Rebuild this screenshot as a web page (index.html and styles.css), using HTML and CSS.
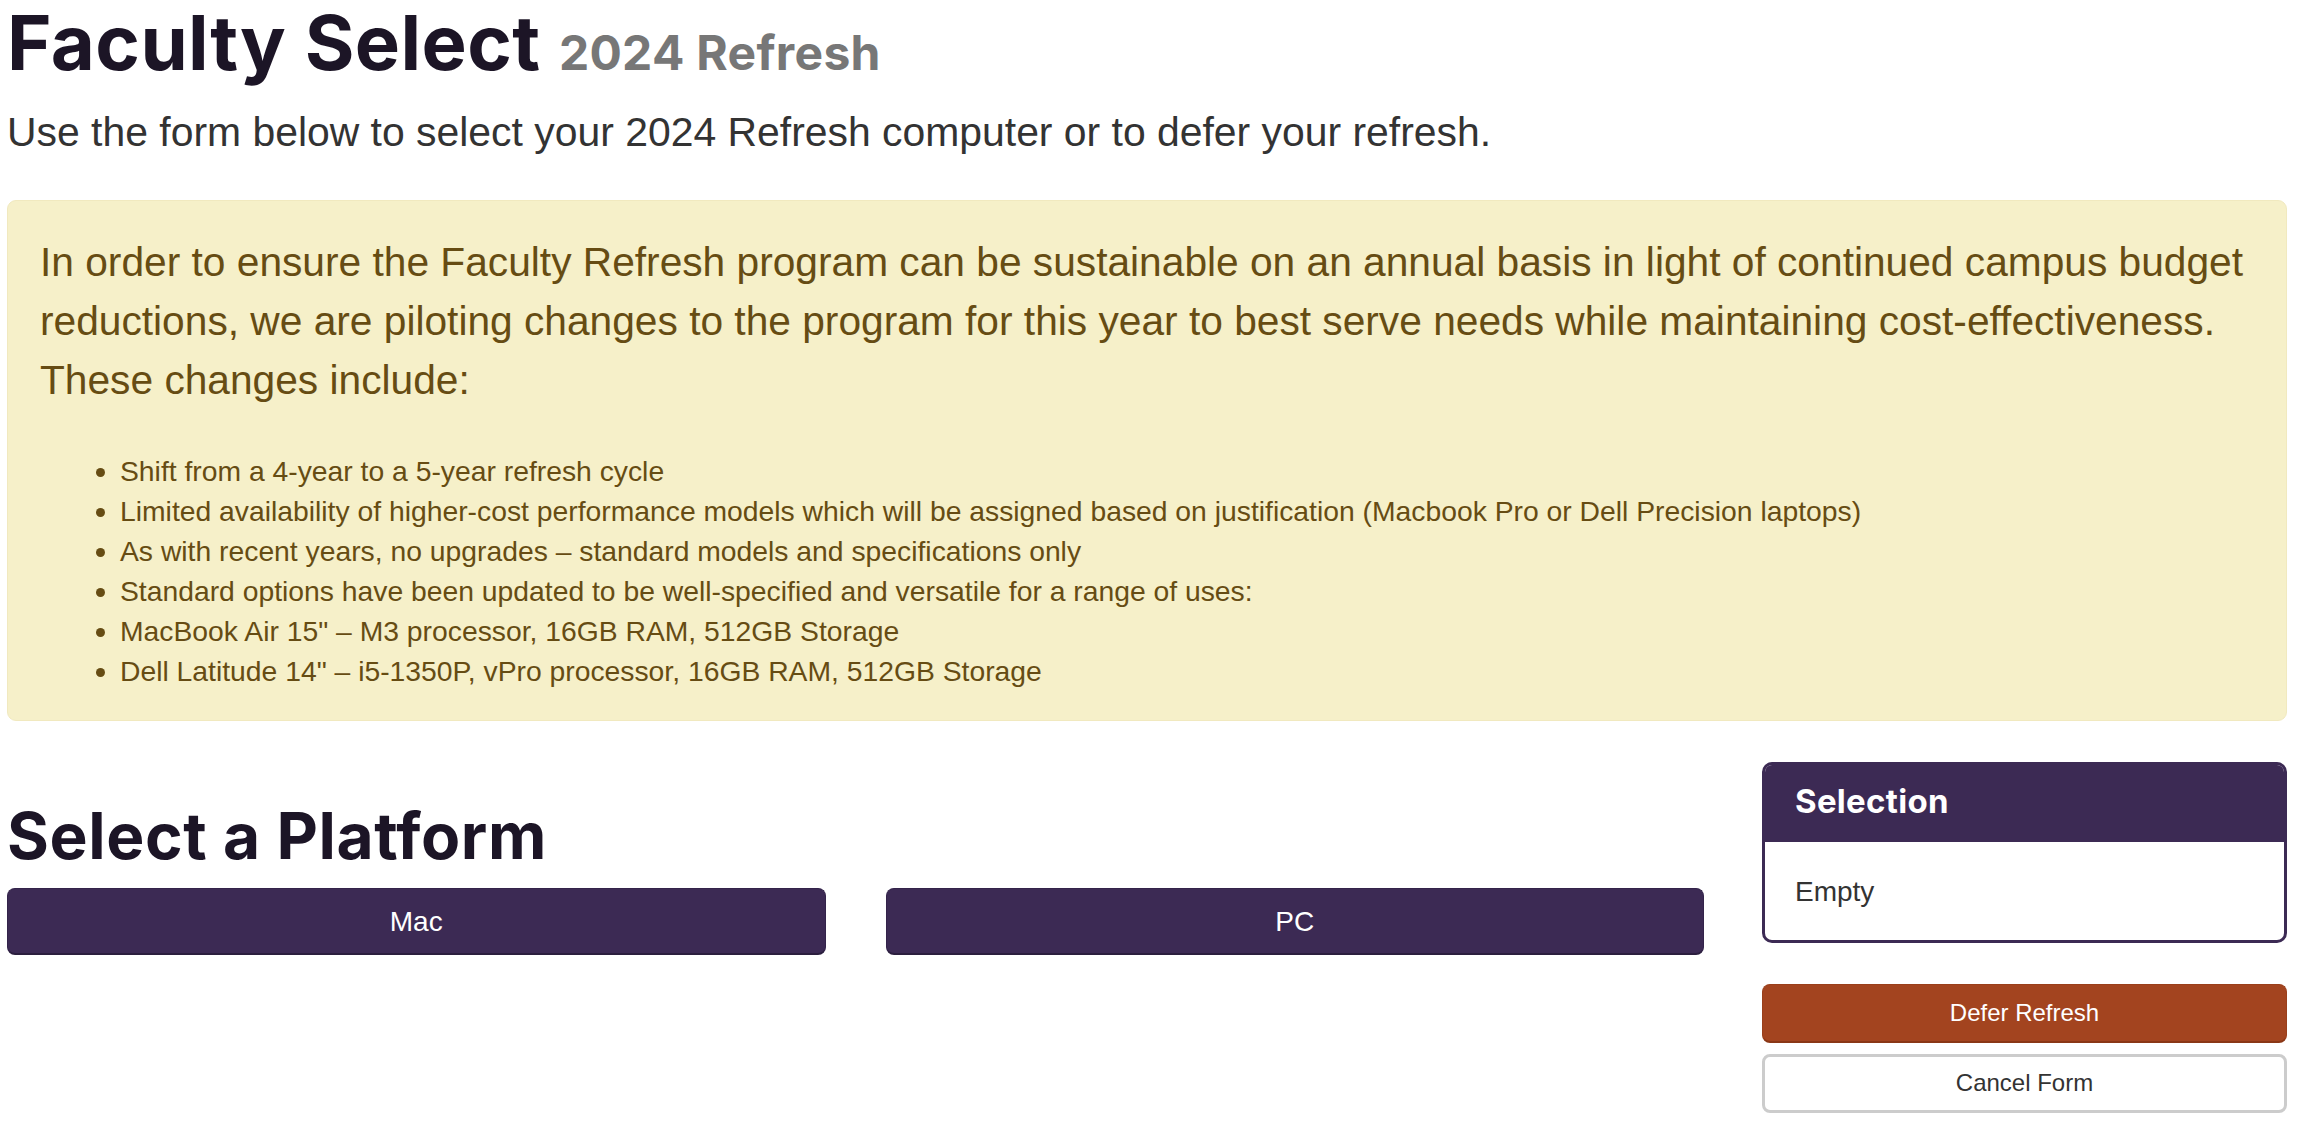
FILE: index.html
```html
<!DOCTYPE html>
<html lang="en">
<head>
<meta charset="utf-8">
<title>Faculty Select 2024 Refresh</title>
<link rel="stylesheet" href="styles.css">
</head>
<body>
<main class="page">
  <h1 class="title">Faculty Select <small class="title-sub">2024 Refresh</small></h1>
  <p class="lead">Use the form below to select your 2024 Refresh computer or to defer your refresh.</p>

  <div class="notice">
    <p class="notice-lead">In order to ensure the Faculty Refresh program can be sustainable on an annual basis in light of continued campus budget reductions, we are piloting changes to the program for this year to best serve needs while maintaining cost-effectiveness. These changes include:</p>
    <ul class="notice-list">
      <li>Shift from a 4-year to a 5-year refresh cycle</li>
      <li>Limited availability of higher-cost performance models which will be assigned based on justification (Macbook Pro or Dell Precision laptops)</li>
      <li>As with recent years, no upgrades – standard models and specifications only</li>
      <li>Standard options have been updated to be well-specified and versatile for a range of uses:</li>
      <li>MacBook Air 15" – M3 processor, 16GB RAM, 512GB Storage</li>
      <li>Dell Latitude 14" – i5-1350P, vPro processor, 16GB RAM, 512GB Storage</li>
    </ul>
  </div>

  <div class="layout">
    <section class="platforms">
      <h2 class="section-title">Select a Platform</h2>
      <div class="platform-buttons">
        <button class="btn btn-platform" type="button">Mac</button>
        <button class="btn btn-platform" type="button">PC</button>
      </div>
    </section>

    <aside class="sidebar">
      <div class="card">
        <div class="card-header">Selection</div>
        <div class="card-body">Empty</div>
      </div>
      <button class="btn btn-defer" type="button">Defer Refresh</button>
      <button class="btn btn-cancel" type="button">Cancel Form</button>
    </aside>
  </div>
</main>
</body>
</html>
```

FILE: styles.css
```css
* {
  box-sizing: border-box;
}

html, body {
  margin: 0;
  padding: 0;
  background: #ffffff;
}

body {
  font-family: "Liberation Sans", Arial, Helvetica, sans-serif;
  color: #333333;
}

.page {
  margin: 0 17px 0 7px;
}

.title {
  margin: 0;
  font-family: Inter, "Noto Sans", sans-serif;
  font-weight: 700;
  font-size: 76px;
  line-height: 84px;
  letter-spacing: 0.4px;
  color: #1c1526;
}

.title-sub {
  font-size: 48px;
  line-height: 1;
  font-weight: 700;
  letter-spacing: 0.3px;
  color: #777777;
}

.lead {
  margin: 18px 0 37px;
  font-size: 40.9px;
  line-height: 61px;
  color: #333333;
}

.notice {
  background: #f6f0c9;
  border: 1px solid #f1e9bf;
  border-radius: 9px;
  padding: 32px 22px 29px 32px;
  color: #664c13;
  margin-bottom: 41px;
}

.notice-lead {
  margin: 0;
  font-size: 40.7px;
  line-height: 59px;
}

.notice-list {
  margin: 41px 0 0;
  padding-left: 80px;
  font-size: 28.3px;
  line-height: 40px;
}

.layout {
  display: grid;
  grid-template-columns: 1fr 525px;
  column-gap: 58px;
  align-items: start;
}

.section-title {
  margin: 36px 0 14px;
  font-family: Inter, "Noto Sans", sans-serif;
  font-weight: 700;
  font-size: 64px;
  line-height: 76px;
  letter-spacing: 0.6px;
  color: #1c1526;
}

.platform-buttons {
  display: grid;
  grid-template-columns: 1fr 1fr;
  column-gap: 60px;
}

.btn {
  display: block;
  width: 100%;
  margin: 0;
  font-family: "Liberation Sans", Arial, Helvetica, sans-serif;
  text-align: center;
  cursor: pointer;
  border-radius: 8px;
}

.btn-platform {
  background: #3c2a54;
  color: #ffffff;
  border: 1px solid #33234a;
  border-bottom: 2px solid #2b1e3e;
  font-size: 28px;
  line-height: 42px;
  padding: 12px 0 10px;
}

.sidebar {
  display: flex;
  flex-direction: column;
}

.card {
  border: 3px solid #3c2a54;
  border-radius: 10px;
  overflow: hidden;
  background: #ffffff;
  margin-bottom: 41px;
}

.card-header {
  background: #3c2a54;
  color: #ffffff;
  font-family: Inter, "Noto Sans", sans-serif;
  font-weight: 700;
  font-size: 33px;
  line-height: 40px;
  letter-spacing: 0.3px;
  padding: 16px 30px 21px;
}

.card-body {
  font-size: 28px;
  line-height: 42px;
  padding: 29px 30px 27px;
  color: #333333;
}

.btn-defer {
  background: #a3441f;
  color: #ffffff;
  border: 1px solid #9a3f1b;
  border-bottom: 2px solid #8a3716;
  font-size: 24px;
  line-height: 36px;
  padding: 10px 0 10px;
}

.btn-cancel {
  margin-top: 11px;
  background: #ffffff;
  color: #333333;
  border: 3px solid #cccccc;
  font-size: 24px;
  line-height: 36px;
  padding: 8px 0 9px;
}
```
